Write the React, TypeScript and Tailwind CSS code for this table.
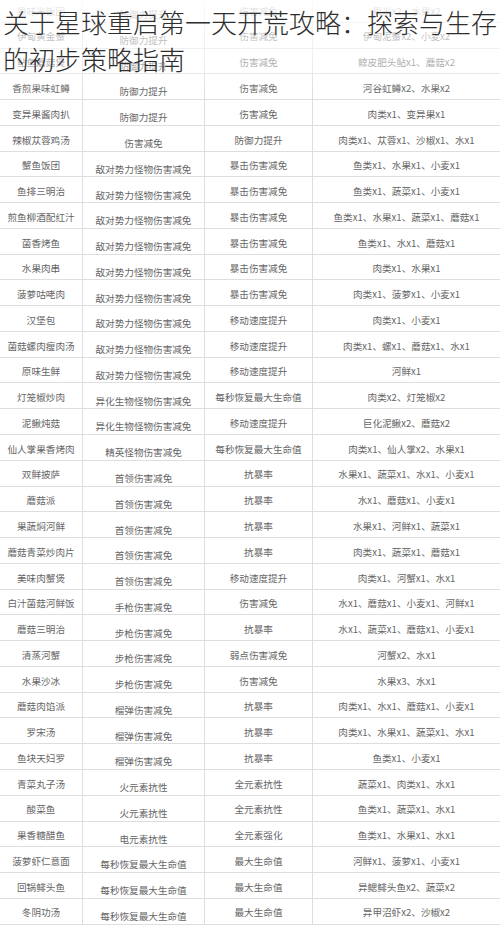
import React from "react";

const rows: [string, string, string, string][] = [
  ["果味米饭团", "防御力提升", "伤害减免", "果米x2、水果x2"],
  ["伊甸黄金蟹", "防御力提升", "伤害减免", "伊甸泥蟹x2、小麦x2"],
  ["鲇鱼蘑菇煲", "防御力提升", "伤害减免", "鲸皮肥头鲇x1、蘑菇x2"],
  ["香煎果味虹鳟", "防御力提升", "伤害减免", "河谷虹鳟x2、水果x2"],
  ["变异果酱肉扒", "防御力提升", "伤害减免", "肉类x1、变异果x1"],
  ["辣椒苁蓉鸡汤", "伤害减免", "防御力提升", "肉类x1、苁蓉x1、沙椒x1、水x1"],
  ["蟹鱼饭团", "敌对势力怪物伤害减免", "暴击伤害减免", "鱼类x1、水果x1、小麦x1"],
  ["鱼排三明治", "敌对势力怪物伤害减免", "暴击伤害减免", "鱼类x1、蔬菜x1、小麦x1"],
  ["煎鱼柳酒配红汁", "敌对势力怪物伤害减免", "暴击伤害减免", "鱼类x1、水果x1、蔬菜x1、蘑菇x1"],
  ["菌香烤鱼", "敌对势力怪物伤害减免", "暴击伤害减免", "鱼类x1、水x1、蘑菇x1"],
  ["水果肉串", "敌对势力怪物伤害减免", "暴击伤害减免", "肉类x1、水果x1"],
  ["菠萝咕咾肉", "敌对势力怪物伤害减免", "暴击伤害减免", "肉类x1、菠萝x1、小麦x1"],
  ["汉堡包", "敌对势力怪物伤害减免", "移动速度提升", "肉类x1、小麦x1"],
  ["菌菇螺肉瘦肉汤", "敌对势力怪物伤害减免", "移动速度提升", "肉类x1、螺x1、蘑菇x1、水x1"],
  ["原味生鲜", "敌对势力怪物伤害减免", "移动速度提升", "河鲜x1"],
  ["灯笼椒炒肉", "异化生物怪物伤害减免", "每秒恢复最大生命值", "肉类x2、灯笼椒x2"],
  ["泥鳅炖菇", "异化生物怪物伤害减免", "移动速度提升", "巨化泥鳅x2、蘑菇x2"],
  ["仙人掌果香烤肉", "精英怪物伤害减免", "每秒恢复最大生命值", "肉类x1、仙人掌x2、水果x1"],
  ["双鲜披萨", "首领伤害减免", "抗暴率", "水果x1、蔬菜x1、水x1、小麦x1"],
  ["蘑菇派", "首领伤害减免", "抗暴率", "水x1、蘑菇x1、小麦x1"],
  ["果蔬焖河鲜", "首领伤害减免", "抗暴率", "水果x1、河鲜x1、蔬菜x1"],
  ["蘑菇青菜炒肉片", "首领伤害减免", "抗暴率", "肉类x1、蔬菜x1、蘑菇x1"],
  ["美味肉蟹煲", "首领伤害减免", "移动速度提升", "肉类x1、河蟹x1、水x1"],
  ["白汁菌菇河鲜饭", "手枪伤害减免", "伤害减免", "水x1、蘑菇x1、小麦x1、河鲜x1"],
  ["蘑菇三明治", "步枪伤害减免", "抗暴率", "水x1、蔬菜x1、蘑菇x1、小麦x1"],
  ["清蒸河蟹", "步枪伤害减免", "弱点伤害减免", "河蟹x2、水x1"],
  ["水果沙冰", "步枪伤害减免", "伤害减免", "水果x3、水x1"],
  ["蘑菇肉馅派", "榴弹伤害减免", "抗暴率", "肉类x1、水x1、蘑菇x1、小麦x1"],
  ["罗宋汤", "榴弹伤害减免", "抗暴率", "肉类x1、水果x1、蔬菜x1、水x1"],
  ["鱼块天妇罗", "榴弹伤害减免", "抗暴率", "鱼类x1、小麦x1"],
  ["青菜丸子汤", "火元素抗性", "全元素抗性", "蔬菜x1、肉类x1、水x1"],
  ["酸菜鱼", "火元素抗性", "全元素抗性", "鱼类x1、蔬菜x1、水x1"],
  ["果香糖醋鱼", "电元素抗性", "全元素强化", "鱼类x1、水果x1、水x1"],
  ["菠萝虾仁意面", "每秒恢复最大生命值", "最大生命值", "河鲜x1、菠萝x1、小麦x1"],
  ["回锅鲱头鱼", "每秒恢复最大生命值", "最大生命值", "异鳃鲱头鱼x2、蔬菜x2"],
  ["冬阴功汤", "每秒恢复最大生命值", "最大生命值", "异甲沼虾x2、沙椒x2"],
];

export default function App() {
  return (
    <div
      className="relative w-[500px] h-[925px] overflow-hidden bg-white"
      style={{ fontFamily: '"Noto Sans CJK SC", "Noto Sans", sans-serif' }}
    >
      <div className="-mt-[3px] grid grid-cols-[83px_122px_108px_1fr] text-[9.6px] text-[#666666]">
        {rows.map((r, i) => (
          <React.Fragment key={i}>
            <div className="h-[25.77px] border-b border-r border-[#dedede] flex justify-center items-center pt-[3px] whitespace-nowrap">
              {r[0]}
            </div>
            <div className="h-[25.77px] border-b border-r border-[#dedede] flex justify-center items-center pt-[10px] whitespace-nowrap">
              {r[1]}
            </div>
            <div className="h-[25.77px] border-b border-r border-[#dedede] flex justify-center items-center pt-[3px] whitespace-nowrap">
              {r[2]}
            </div>
            <div className="h-[25.77px] border-b border-[#dedede] flex justify-center items-center pt-[3px] whitespace-nowrap">
              {r[3]}
            </div>
          </React.Fragment>
        ))}
      </div>
      <div className="absolute left-0 top-0 w-full h-[100px] bg-[linear-gradient(to_bottom,rgba(255,255,255,0.9)_0px,rgba(255,255,255,0.62)_30px,rgba(255,255,255,0.5)_62px,rgba(255,255,255,0)_92px)]" />
      <div className="absolute left-[3px] top-[3px] text-[26px] leading-[37px] text-[#2e2e2e] font-light whitespace-nowrap">
        <div>关于星球重启第一天开荒攻略：探索与生存</div>
        <div>的初步策略指南</div>
      </div>
    </div>
  );
}
